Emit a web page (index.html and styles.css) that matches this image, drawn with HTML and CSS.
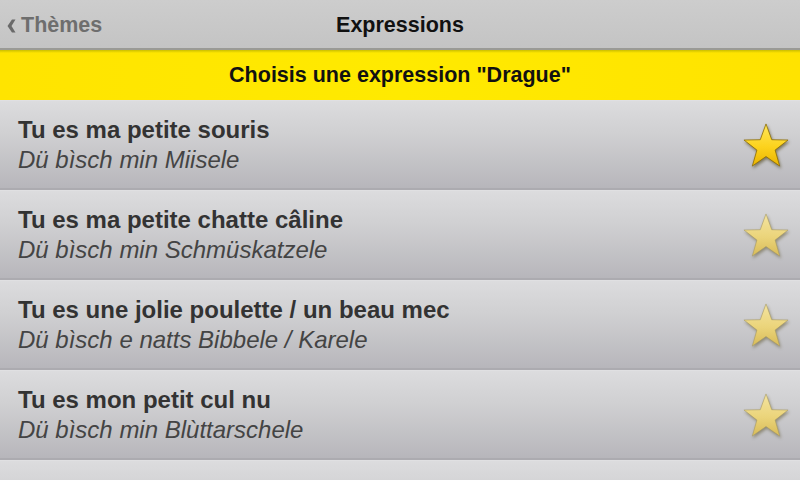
FILE: index.html
```html
<!DOCTYPE html>
<html lang="fr">
<head>
<meta charset="utf-8">
<title>Expressions</title>
<link rel="stylesheet" href="styles.css">
</head>
<body>
<svg width="0" height="0" class="defs">
  <defs>
    <linearGradient id="gOn" x1="0" y1="0" x2="0" y2="1">
      <stop offset="0" stop-color="#ffe75a"/>
      <stop offset="0.55" stop-color="#fcd21c"/>
      <stop offset="1" stop-color="#e9b300"/>
    </linearGradient>
    <linearGradient id="gOff" x1="0" y1="0" x2="0" y2="1">
      <stop offset="0" stop-color="#f4e4a0"/>
      <stop offset="0.55" stop-color="#ebd47a"/>
      <stop offset="1" stop-color="#d8bb58"/>
    </linearGradient>
  </defs>
</svg>
<header class="topbar">
  <div class="back"><svg class="chev" viewBox="0 0 9 14"><path d="M5 0.5 L8.5 0.5 L4.5 7 L8.5 13.5 L5 13.5 L0.5 7 Z" fill="#6a6a6a"/></svg>Thèmes</div>
  <div class="title">Expressions</div>
</header>
<div class="banner"><span>Choisis une expression "Drague"</span></div>
<ul class="list">
  <li class="row">
    <div class="texts">
      <div class="fr">Tu es ma petite souris</div>
      <div class="als">Dü bìsch min Miisele</div>
    </div>
    <svg class="star" viewBox="0 0 50 48"><polygon class="on" points="25,2 31,18.5 48,18.8 34.5,29.3 39.3,46 25,36 10.7,46 15.5,29.3 2,18.8 19,18.5"/></svg>
  </li>
  <li class="row">
    <div class="texts">
      <div class="fr">Tu es ma petite chatte câline</div>
      <div class="als">Dü bìsch min Schmüskatzele</div>
    </div>
    <svg class="star" viewBox="0 0 50 48"><polygon class="off" points="25,2 31,18.5 48,18.8 34.5,29.3 39.3,46 25,36 10.7,46 15.5,29.3 2,18.8 19,18.5"/></svg>
  </li>
  <li class="row">
    <div class="texts">
      <div class="fr">Tu es une jolie poulette / un beau mec</div>
      <div class="als">Dü bìsch e natts Bibbele / Karele</div>
    </div>
    <svg class="star" viewBox="0 0 50 48"><polygon class="off" points="25,2 31,18.5 48,18.8 34.5,29.3 39.3,46 25,36 10.7,46 15.5,29.3 2,18.8 19,18.5"/></svg>
  </li>
  <li class="row">
    <div class="texts">
      <div class="fr">Tu es mon petit cul nu</div>
      <div class="als">Dü bìsch min Blùttarschele</div>
    </div>
    <svg class="star" viewBox="0 0 50 48"><polygon class="off" points="25,2 31,18.5 48,18.8 34.5,29.3 39.3,46 25,36 10.7,46 15.5,29.3 2,18.8 19,18.5"/></svg>
  </li>
  <li class="row">
    <div class="texts">
      <div class="fr">Tu es mon trésor et mon désir</div>
      <div class="als">Dü bìsch min Schàtzele</div>
    </div>
    <svg class="star" viewBox="0 0 50 48"><polygon class="off" points="25,2 31,18.5 48,18.8 34.5,29.3 39.3,46 25,36 10.7,46 15.5,29.3 2,18.8 19,18.5"/></svg>
  </li>
</ul>
</body>
</html>
```
FILE: styles.css
```css
html, body {
  margin: 0;
  padding: 0;
  width: 800px;
  height: 480px;
  overflow: hidden;
  font-family: "Liberation Sans", Arial, sans-serif;
  background: #d6d6d8;
}
.defs {
  position: absolute;
  width: 0;
  height: 0;
}
.topbar {
  display: flex;
  align-items: center;
  justify-content: center;
  position: relative;
  background: linear-gradient(#cdcdcd, #c4c4c4);
  border-bottom: 2px solid #9a9a96;
  padding-top: 2px;
  box-sizing: border-box;
  height: 50px;
}
.topbar .title {
  font-weight: bold;
  font-size: 21.5px;
  color: #111;
}
.back {
  position: absolute;
  left: 7px;
  top: 13px;
  font-weight: bold;
  font-size: 21.5px;
  color: #6e6e6e;
  display: flex;
  align-items: center;
}
.chev {
  width: 9px;
  height: 14px;
  margin-right: 5px;
  margin-top: 1px;
}
.banner {
  height: 50px;
  display: flex;
  align-items: center;
  justify-content: center;
  font-weight: bold;
  font-size: 21.5px;
  color: #111;
  background:
    linear-gradient(180deg, rgba(190,180,0,0.8) 0px, rgba(255,230,0,0) 3px),
    linear-gradient(90deg, #ffe400 0%, #ffea00 50%, #ffe300 100%);
}
.list {
  list-style: none;
  margin: 0;
  padding: 0;
}
.row {
  height: 90px;
  box-sizing: border-box;
  display: flex;
  align-items: center;
  justify-content: space-between;
  padding: 0 10px 0 18px;
  background: linear-gradient(180deg, #dcdcde 0%, #cfcfd1 40%, #b7b6bb 100%);
  border-top: 1px solid #e0e0e2;
  border-bottom: 2px solid #acabb0;
}
.texts {
  display: flex;
  flex-direction: column;
  margin-top: 1px;
}
.fr {
  font-weight: bold;
  font-size: 24px;
  line-height: 30px;
  color: #333;
}
.als {
  font-style: italic;
  font-size: 24px;
  line-height: 30px;
  color: #444;
}
.star {
  width: 48px;
  height: 46px;
  margin-top: 0;
  overflow: visible;
}
.star .on {
  fill: url(#gOn);
  stroke: #8a6a00;
  stroke-width: 0.8;
  filter: drop-shadow(1px 2px 1.5px rgba(60,50,0,0.55));
}
.star .off {
  fill: url(#gOff);
  stroke: #a89a60;
  stroke-width: 0.6;
  filter: drop-shadow(1px 2px 1.5px rgba(60,50,0,0.4));
}
```
